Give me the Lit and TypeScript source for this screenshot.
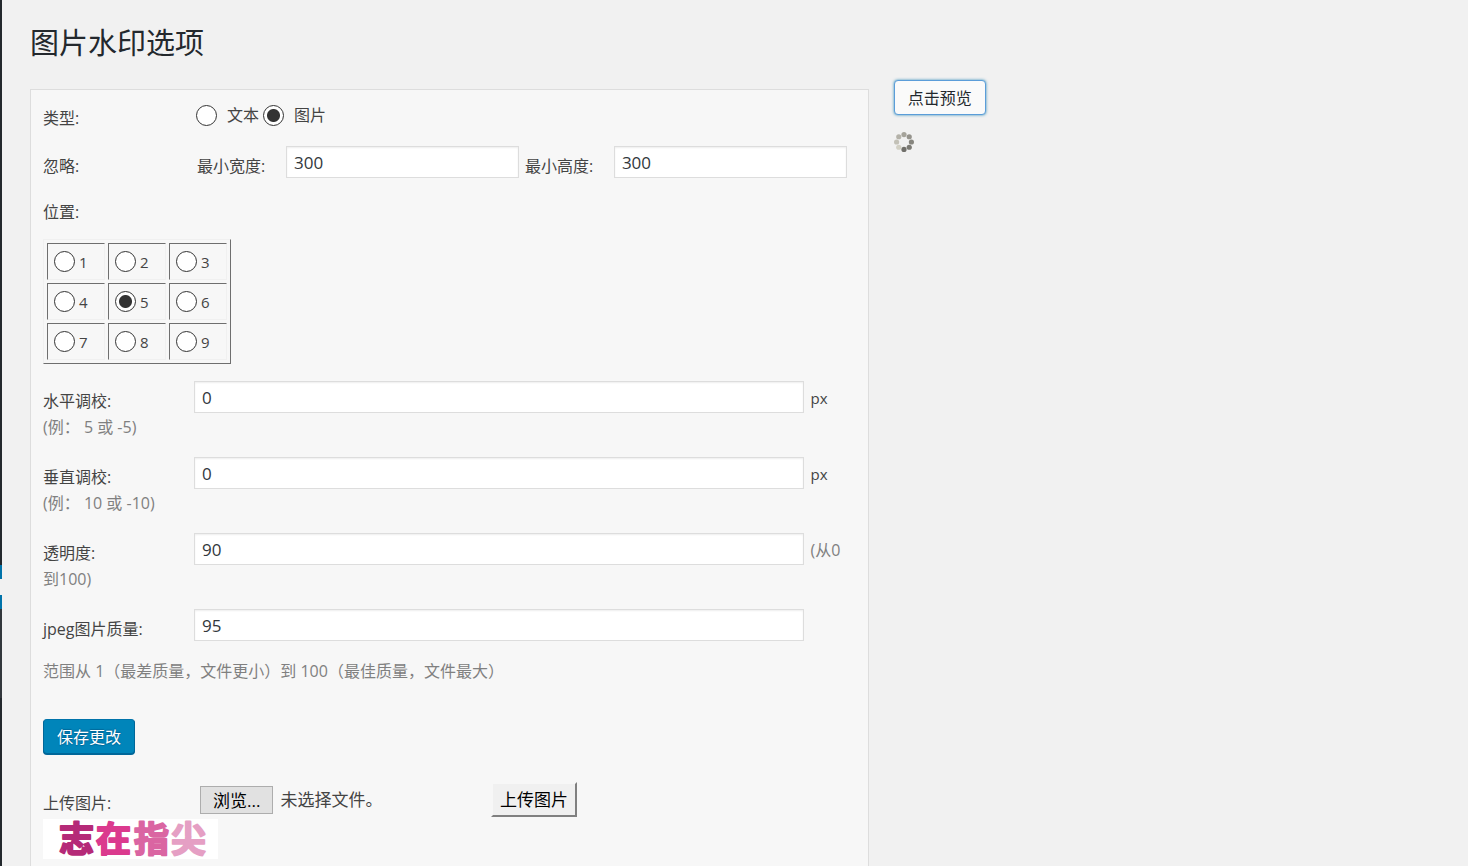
import { LitElement, html, css, svg } from "lit";
import { customElement, state } from "lit/decorators.js";

@customElement("loading-spinner")
class LoadingSpinner extends LitElement {
  static styles = css`
    :host { display: block; width: 20px; height: 20px; }
    svg { display: block; }
  `;
  render() {
    const tones = ["#a5a39a", "#95938c", "#86857e", "#7b7a74", "#706f6a", "#d2d0c4", "#c3c1b7", "#b4b2a9"];
    return html`<svg width="20" height="20" viewBox="0 0 20 20" role="img" aria-label="loading">
      ${tones.map((t, i) => {
        const a = (i * Math.PI) / 4;
        return svg`<circle cx=${10 + 7.4 * Math.sin(a)} cy=${10 - 7.4 * Math.cos(a)} r="2.6" fill=${t}></circle>`;
      })}
    </svg>`;
  }
}

@customElement("app-root")
export class AppRoot extends LitElement {
  @state() private kind = "image";
  @state() private position = 5;

  static styles = css`
    :host {
      display: flex;
      height: 100vh;
      overflow: hidden;
      background: #f1f1f1;
      color: #444;
      font: 16px/26px "Open Sans", "Noto Sans CJK SC", sans-serif;
    }
    * { box-sizing: border-box; }
    .menu { flex: none; width: 2px; display: flex; flex-direction: column; }
    .menu-top { height: 565px; background: #23282d; }
    .menu-current { height: 14px; background: #0073aa; }
    .menu-arrow { height: 16px; }
    .submenu { height: 89px; background: #32373c; }
    .menu-rest { flex: 1; background: #23282d; }
    .page { flex: 1; min-width: 0; overflow-y: auto; scrollbar-width: none; padding: 23px 15px 0 28px; }
    h1 { margin: 0 0 26px; font-size: 29px; line-height: 40px; font-weight: 400; color: #23282d; }
    .columns { display: grid; grid-template-columns: 3fr 2fr; gap: 25px; align-items: start; }
    .panel { padding: 9px 12px 12px; background: #f7f7f7; border: 1px solid #ddd; }
    .line { display: grid; grid-template-columns: 151px 1fr; align-items: center; }
    .ignore-line { margin-top: 14px; }
    .name { padding-top: 6px; }
    .choices { display: flex; align-items: center; padding-left: 2px; gap: 4px; }
    .choice { display: flex; align-items: center; gap: 10px; }
    input[type="radio"] {
      appearance: none;
      flex: none;
      width: 21px;
      height: 21px;
      margin: 0;
      border: 1px solid #333;
      border-radius: 50%;
      background: #fff;
    }
    input[type="radio"]:checked { background: radial-gradient(circle, #333 6px, #fff 7px); }
    .field {
      width: 100%;
      min-width: 0;
      height: 32px;
      margin: 0;
      padding: 0 7px;
      border: 1px solid #ddd;
      border-radius: 0;
      background: #fff;
      box-shadow: inset 0 1px 2px rgba(0, 0, 0, 0.07);
      color: #32373c;
      font: 17px/24px "Open Sans", sans-serif;
    }
    .sizes { display: grid; grid-template-columns: 89px 1fr 89px 1fr; gap: 0 3px; padding: 0 9px 0 0; align-items: center; }
    .sizes label { padding: 8px 0 0 3px; }
    .ignore-line .name { padding-top: 8px; }
    .position-title { margin-top: 20px; }
    table { margin: 14px 0 17px; border: 1px solid; border-color: #f0f0f0 #6f6f6f #6f6f6f #f0f0f0; border-spacing: 3px; }
    td { width: 58px; height: 37px; padding: 0 6px; border: 1px solid; border-color: #6f6f6f #f0f0f0 #f0f0f0 #6f6f6f; font-size: 15px; }
    td .choice { gap: 4px; }
    .setting { display: grid; grid-template-columns: 151px 75% 1fr; align-items: center; margin-bottom: 16px; }
    .setting .unit { padding: 2px 0 0 7px; white-space: nowrap; font-size: 15px; line-height: 24px; }
    .setting label { padding-top: 8px; line-height: 24px; }
    .hint { color: #808080; font-size: 16px; }
    .setting .hint-line { grid-column: 1 / -1; line-height: 28px; }
    .quality { margin-bottom: 17px; }
    .note { margin: 0; }
    .button {
      display: block;
      height: 35px;
      padding: 0 13px;
      border-radius: 4px;
      font: 16px/35px "Open Sans", "Noto Sans CJK SC", sans-serif;
    }
    .save {
      margin-top: 35px;
      border: 1px solid;
      border-color: #0073aa #006799 #006799;
      background: #0085ba;
      color: #fff;
      box-shadow: 0 1px 0 #006799;
      text-shadow: 0 -1px 1px #006799, 0 1px 1px #006799;
    }
    .upload { display: grid; grid-template-columns: 157px 291px auto; justify-content: start; align-items: center; margin-top: 28px; }
    .picker { display: flex; align-items: center; gap: 7px; font-size: 17px; }
    .browse { height: 28px; padding: 0 12px; border: 1px solid #adadad; background: #e1e1e1; color: #000; line-height: 27px; }
    .file { position: absolute; width: 1px; height: 1px; opacity: 0; }
    .send {
      height: 35px;
      padding: 0 7px;
      border: 2px solid;
      border-color: #f7f7f7 #808080 #808080 #f7f7f7;
      background: #f0f0f0;
      color: #000;
      font: 17px/30px "Open Sans", "Noto Sans CJK SC", sans-serif;
    }
    .logo { display: block; overflow: visible; margin-top: 2px; background: #fff; }
    .logo text {
      font: 700 35px "Noto Sans CJK SC", sans-serif;
      fill: currentColor;
      stroke: currentColor;
      stroke-width: 2px;
      stroke-linejoin: round;
      stroke-linecap: round;
    }
    .c1 { color: #b52a78; }
    .c2 { color: #db3a8e; }
    .c3 { color: #da65a2; }
    .c4 { color: #e59fc4; }
    .preview {
      margin: -9px 0 17px;
      border: 1px solid #5b9dd9;
      background: #fafafa;
      color: #23282d;
      box-shadow: 0 0 3px rgba(0, 115, 170, 0.8);
    }
  `;

  private typeChoice(value: string, text: string) {
    return html`<label class="choice"><input type="radio" name="type" .checked=${this.kind === value}
      @change=${() => (this.kind = value)} />${text}</label>`;
  }

  private cell(n: number) {
    return html`<td><label class="choice"><input type="radio" name="position" .checked=${this.position === n}
      @change=${() => (this.position = n)} />${n}</label></td>`;
  }

  private setting(id: string, name: string, value: string, unit: unknown, hint: string) {
    return html`<div class="setting">
      <label for=${id}>${name}</label>
      <input class="field" id=${id} type="text" .value=${value} />
      <span class="unit">${unit}</span>
      <span class="hint hint-line">${hint}</span>
    </div>`;
  }

  render() {
    return html`
      <aside class="menu">
        <div class="menu-top"></div><div class="menu-current"></div><div class="menu-arrow"></div>
        <div class="menu-current"></div><div class="submenu"></div><div class="menu-rest"></div>
      </aside>
      <main class="page">
        <h1>图片水印选项</h1>
        <div class="columns">
          <form class="panel" @submit=${(e: Event) => e.preventDefault()}>
            <div class="line">
              <span class="name">类型:</span>
              <div class="choices">${this.typeChoice("text", "文本")}${this.typeChoice("image", "图片")}</div>
            </div>
            <div class="line ignore-line">
              <span class="name">忽略:</span>
              <div class="sizes">
                <label for="min-w">最小宽度:</label><input class="field" id="min-w" type="text" value="300" />
                <label for="min-h">最小高度:</label><input class="field" id="min-h" type="text" value="300" />
              </div>
            </div>
            <div class="position-title">位置:</div>
            <table>
              <tbody>
                ${[1, 4, 7].map((r) => html`<tr>${[r, r + 1, r + 2].map((n) => this.cell(n))}</tr>`)}
              </tbody>
            </table>
            ${this.setting("dx", "水平调校:", "0", "px", "(例： 5 或 -5)")}
            ${this.setting("dy", "垂直调校:", "0", "px", "(例： 10 或 -10)")}
            ${this.setting("opacity", "透明度:", "90", html`<span class="hint">(从0</span>`, "到100)")}
            <div class="setting quality">
              <label for="quality">jpeg图片质量:</label>
              <input class="field" id="quality" type="text" value="95" />
            </div>
            <p class="note hint">范围从 1（最差质量，文件更小）到 100（最佳质量，文件最大）</p>
            <button class="button save" type="submit">保存更改</button>
            <div class="upload">
              <span class="name">上传图片:</span>
              <div class="picker">
                <input class="file" id="file" type="file" />
                <label class="browse" for="file">浏览...</label>
                <span>未选择文件。</span>
              </div>
              <button class="send" type="button">上传图片</button>
            </div>
            <svg class="logo" width="175" height="40" viewBox="0 0 175 40">
              <text class="c1" x="16" y="33">志</text>
              <text class="c2" x="53" y="33">在</text>
              <text class="c3" x="91" y="33">指</text>
              <text class="c4" x="128" y="33">尖</text>
            </svg>
          </form>
          <section>
            <button class="button preview" type="button">点击预览</button>
            <loading-spinner></loading-spinner>
          </section>
        </div>
      </main>
    `;
  }
}
